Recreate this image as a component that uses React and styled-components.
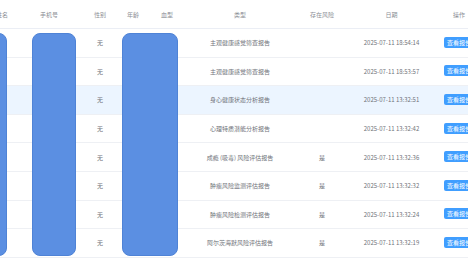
import React from 'react';
import styled, { createGlobalStyle } from 'styled-components';

const GlobalStyle = createGlobalStyle`
  html, body {
    margin: 0;
    padding: 0;
    background: #fff;
    overflow: hidden;
  }
  body {
    font-family: "Noto Sans CJK SC", "Liberation Sans", sans-serif;
  }
`;

const COLS = '24px 70px 32px 34px 34px 112px 52px 87px 48px';

const Viewport = styled.div`
  width: 468px;
  height: 264px;
  overflow: hidden;
`;

const Table = styled.div`
  position: relative;
  width: 493px;
  margin-left: -10px;
`;

const HeaderRow = styled.div`
  display: grid;
  grid-template-columns: ${COLS};
  height: 29px;
  align-items: center;
  border-bottom: 1px solid #ebeef5;
  box-sizing: border-box;
  background: #fff;
`;

const HeadCell = styled.div`
  text-align: center;
  font-size: 6px;
  color: #8c8f96;
  white-space: nowrap;
`;

const Row = styled.div`
  display: grid;
  grid-template-columns: ${COLS};
  height: 28.6px;
  align-items: center;
  border-bottom: 1px solid #eef0f4;
  box-sizing: border-box;
  background: ${p => (p.$active ? '#ecf5ff' : '#fff')};
`;

const Cell = styled.div`
  text-align: center;
  font-size: 6px;
  color: #70737a;
  white-space: nowrap;
`;

const ViewButton = styled.span`
  display: inline-block;
  background: #409eff;
  color: #fff;
  font-size: 6px;
  line-height: 11px;
  height: 11px;
  padding: 0 3px;
  border-radius: 2px;
  margin-top: -3px;
`;

// hand-drawn redaction blocks lying over the name / phone / age columns
const Redact = styled.div`
  position: absolute;
  top: 33px;
  height: 223px;
  background: #5b8fe2;
  border: 1px solid #4f83d6;
  box-sizing: border-box;
  border-radius: 8px;
`;

const rows = [
  { type: '主观健康感觉筛查报告', risk: '', date: '2025-07-11 18:54:14' },
  { type: '主观健康感觉筛查报告', risk: '', date: '2025-07-11 18:53:57' },
  { type: '身心健康状态分析报告', risk: '', date: '2025-07-11 13:32:51', active: true },
  { type: '心理特质潜能分析报告', risk: '', date: '2025-07-11 13:32:42' },
  { type: '成瘾 (吸毒) 风险评估报告', risk: '是', date: '2025-07-11 13:32:36' },
  { type: '肿瘤风险监测评估报告', risk: '是', date: '2025-07-11 13:32:32' },
  { type: '肿瘤风险检测评估报告', risk: '是', date: '2025-07-11 13:32:24' },
  { type: '阿尔茨海默风险评估报告', risk: '是', date: '2025-07-11 13:32:19' },
];

const heads = ['姓名', '手机号', '性别', '年龄', '血型', '类型', '存在风险', '日期', '操作'];

export default function App() {
  return (
    <Viewport>
      <GlobalStyle />
      <Table>
        <HeaderRow>
          {heads.map(h => <HeadCell key={h}>{h}</HeadCell>)}
        </HeaderRow>
        {rows.map((r, i) => (
          <Row key={i} $active={r.active}>
            <Cell />
            <Cell />
            <Cell>无</Cell>
            <Cell />
            <Cell />
            <Cell>{r.type}</Cell>
            <Cell>{r.risk}</Cell>
            <Cell>{r.date}</Cell>
            <Cell><ViewButton>查看报告</ViewButton></Cell>
          </Row>
        ))}
        <Redact style={{ left: '-20px', width: '37px' }} />
        <Redact style={{ left: '42px', width: '44px' }} />
        <Redact style={{ left: '132px', width: '56px' }} />
      </Table>
    </Viewport>
  );
}
